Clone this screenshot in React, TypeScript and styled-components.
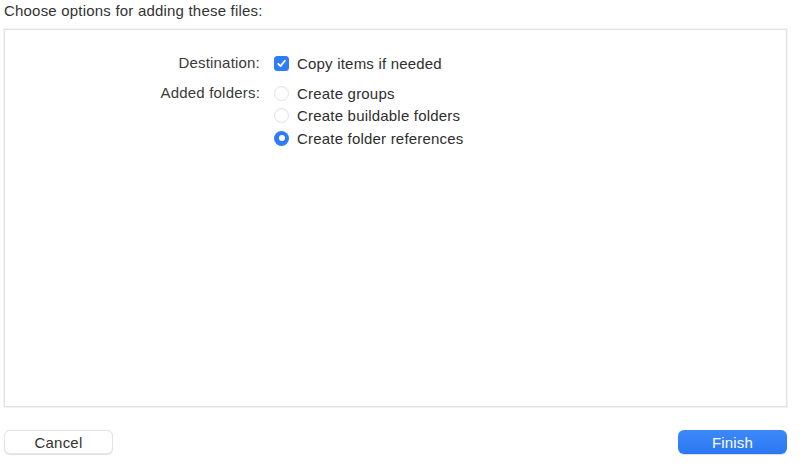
import React from "react";
import styled, { createGlobalStyle } from "styled-components";

const Global = createGlobalStyle`
  html, body { margin: 0; padding: 0; background: #ffffff; }
  body { font-family: "Liberation Sans", Arial, sans-serif; letter-spacing: 0.2px; -webkit-font-smoothing: antialiased; }
`;

const Page = styled.div`
  width: 800px;
  height: 465px;
  box-sizing: border-box;
  padding: 2px 13px 10px 4px;
  display: flex;
  flex-direction: column;
  background: #fff;
`;

const Heading = styled.div`
  font-size: 15px;
  color: #333;
  height: 18px;
  line-height: 18px;
  margin-bottom: 9px;
`;

const Panel = styled.div`
  height: 378px;
  box-sizing: border-box;
  border: 1px solid #e3e3e3;
  box-shadow: 0 0 0 1px #f2f2f2;
  background: #fff;
  padding: 23px 0 0 0;
  display: grid;
  grid-template-columns: 255px auto;
  column-gap: 14px;
  row-gap: 10px;
  align-content: start;
`;

const Label = styled.div`
  font-size: 15px;
  color: #3a3a3a;
  text-align: right;
  line-height: 20px;
`;

const Options = styled.div`
  display: flex;
  flex-direction: column;
  gap: 2.5px;
`;

const Option = styled.div`
  display: flex;
  align-items: center;
  gap: 8px;
  height: 20px;
  font-size: 15px;
  color: #2e2e2e;
`;

const CheckBox = styled.span`
  width: 15px;
  height: 15px;
  border-radius: 3.5px;
  background: #2f7cf6;
  display: flex;
  align-items: center;
  justify-content: center;
  flex-shrink: 0;
`;

const Radio = styled.span<{ $on?: boolean }>`
  width: 15px;
  height: 15px;
  border-radius: 50%;
  box-sizing: border-box;
  flex-shrink: 0;
  display: flex;
  align-items: center;
  justify-content: center;
  background: ${(p) => (p.$on ? "#2f7cf6" : "#fff")};
  border: ${(p) => (p.$on ? "none" : "1px solid #e2e2e2")};
  box-shadow: ${(p) => (p.$on ? "none" : "inset 0 1px 1px rgba(0,0,0,0.03)")};
  &::after {
    content: "";
    display: ${(p) => (p.$on ? "block" : "none")};
    width: 6px;
    height: 6px;
    border-radius: 50%;
    background: #fff;
  }
`;

const Footer = styled.div`
  display: flex;
  justify-content: space-between;
  align-items: center;
  margin-top: 23px;
`;

const Button = styled.button<{ $primary?: boolean }>`
  width: 109px;
  height: 24px;
  border-radius: 6px;
  font-family: inherit;
  letter-spacing: inherit;
  font-size: 15px;
  padding: 0;
  cursor: default;
  border: ${(p) => (p.$primary ? "none" : "1px solid #e4e4e4")};
  background: ${(p) => (p.$primary ? "linear-gradient(#3d88f8, #2c78f4)" : "#fff")};
  color: ${(p) => (p.$primary ? "#fff" : "#333")};
  box-shadow: ${(p) => (p.$primary ? "0 0.5px 1px rgba(0,0,0,0.15)" : "0 0.5px 1px rgba(0,0,0,0.12)")};
`;

export default function App() {
  return (
    <>
      <Global />
      <Page>
        <Heading>Choose options for adding these files:</Heading>
        <Panel>
          <Label>Destination:</Label>
          <Options>
            <Option>
              <CheckBox>
                <svg width="11" height="11" viewBox="0 0 11 11">
                  <path d="M2.2 5.8 L4.5 8.1 L8.9 2.8" fill="none" stroke="#fff" strokeWidth="1.8" strokeLinecap="round" strokeLinejoin="round" />
                </svg>
              </CheckBox>
              Copy items if needed
            </Option>
          </Options>
          <Label>Added folders:</Label>
          <Options>
            <Option>
              <Radio />
              Create groups
            </Option>
            <Option>
              <Radio />
              Create buildable folders
            </Option>
            <Option>
              <Radio $on />
              Create folder references
            </Option>
          </Options>
        </Panel>
        <Footer>
          <Button>Cancel</Button>
          <Button $primary>Finish</Button>
        </Footer>
      </Page>
    </>
  );
}
